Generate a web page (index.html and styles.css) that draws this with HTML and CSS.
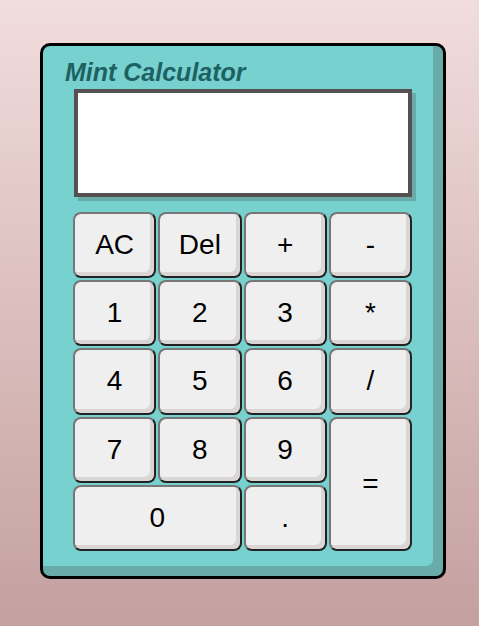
FILE: index.html
```html
<!DOCTYPE html>
<html>
<head>
<meta charset="utf-8">
<link rel="stylesheet" href="styles.css">
</head>
<body>
<div class="calc">
  <h1 class="title">Mint Calculator</h1>
  <div class="display"></div>
  <div class="keys">
    <button class="key">AC</button>
    <button class="key">Del</button>
    <button class="key">+</button>
    <button class="key">-</button>
    <button class="key">1</button>
    <button class="key">2</button>
    <button class="key">3</button>
    <button class="key">*</button>
    <button class="key">4</button>
    <button class="key">5</button>
    <button class="key">6</button>
    <button class="key">/</button>
    <button class="key">7</button>
    <button class="key">8</button>
    <button class="key">9</button>
    <button class="key key-equals">=</button>
    <button class="key key-zero">0</button>
    <button class="key">.</button>
  </div>
</div>
</body>
</html>
```
FILE: styles.css
```css
html, body {
  margin: 0;
  padding: 0;
}
body {
  height: 626px;
  background: linear-gradient(to bottom, #f1dddc, #c4a09f);
  overflow: hidden;
}
.calc {
  margin: 43px 0 0 40px;
  width: 400px;
  height: 518px;
  padding-top: 12px;
  border: 3px solid #000;
  border-radius: 10px;
  background: #76d1cf;
  box-shadow: inset -10px -10px 0 #68aba9;
}
.title {
  margin: 0 0 0 22px;
  font: italic bold 25px/29px "Liberation Sans", Arial, sans-serif;
  color: #1e6163;
}
.display {
  margin: 2px 0 0 31px;
  width: 330px;
  height: 100px;
  border: 4px solid #555052;
  background: #fff;
  box-shadow: 4px 4px 0 #68aba9;
}
.keys {
  margin: 15px 0 0 30px;
  width: 339px;
  height: 339px;
  display: grid;
  grid-template-columns: repeat(4, 1fr);
  grid-template-rows: repeat(5, 1fr);
  gap: 2px;
}
.key {
  margin: 0;
  padding: 0;
  font: 28px "Liberation Sans", Arial, sans-serif;
  color: #000;
  background: #efefef;
  border: 2px solid;
  border-color: #777 #222 #222 #777;
  border-radius: 8px;
  box-shadow: inset -4px -4px 0 #d9d6d5;
}
.key-equals {
  grid-row: span 2;
}
.key-zero {
  grid-column: span 2;
}
```
